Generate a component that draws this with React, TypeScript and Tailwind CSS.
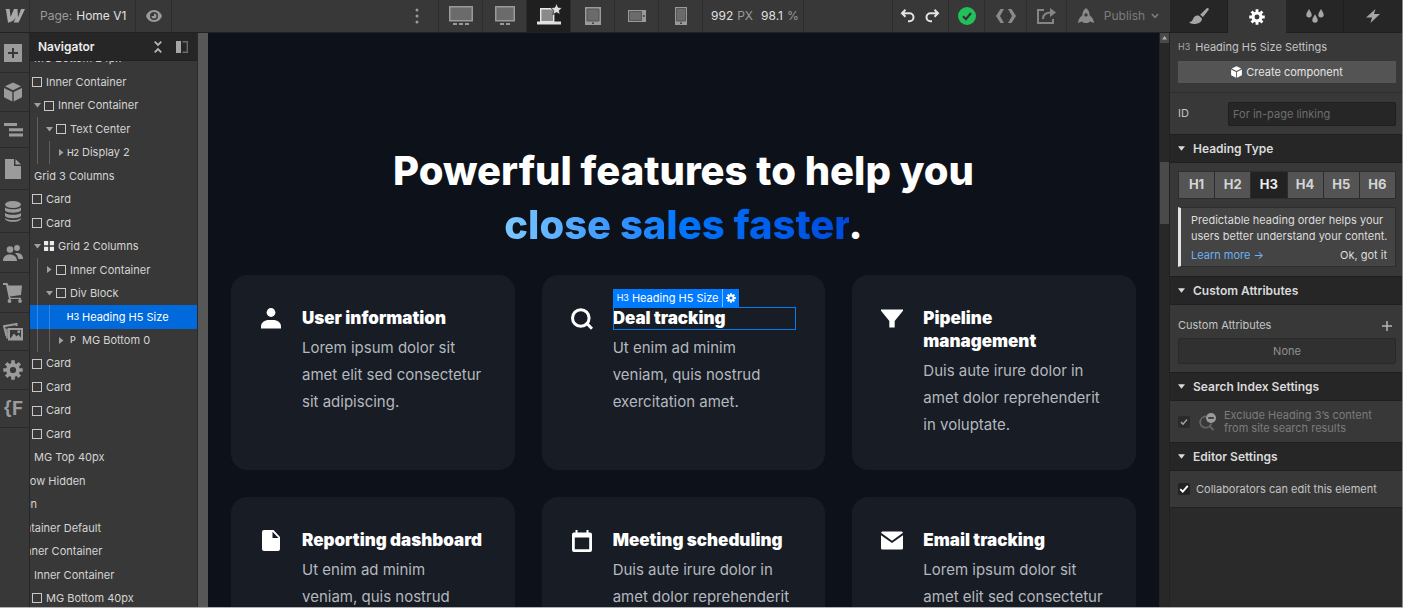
import { useState } from 'react';
import type { ReactNode } from 'react';
import clsx from 'clsx';

type TreeItem = {
  label: string;
  level: number;
  icon?: 'box' | 'grid' | 'H2' | 'H3' | 'P';
  arrow?: 'open' | 'closed';
};

const tree: TreeItem[] = [
  { label: 'MG Bottom 24px', level: 4 },
  { label: 'Inner Container', level: 5, icon: 'box' },
  { label: 'Inner Container', level: 6, icon: 'box', arrow: 'open' },
  { label: 'Text Center', level: 7, icon: 'box', arrow: 'open' },
  { label: 'Display 2', level: 8, icon: 'H2', arrow: 'closed' },
  { label: 'Grid 3 Columns', level: 4 },
  { label: 'Card', level: 5, icon: 'box' },
  { label: 'Card', level: 5, icon: 'box' },
  { label: 'Grid 2 Columns', level: 6, icon: 'grid', arrow: 'open' },
  { label: 'Inner Container', level: 7, icon: 'box', arrow: 'closed' },
  { label: 'Div Block', level: 7, icon: 'box', arrow: 'open' },
  { label: 'Heading H5 Size', level: 8, icon: 'H3' },
  { label: 'MG Bottom 0', level: 8, icon: 'P', arrow: 'closed' },
  { label: 'Card', level: 5, icon: 'box' },
  { label: 'Card', level: 5, icon: 'box' },
  { label: 'Card', level: 5, icon: 'box' },
  { label: 'Card', level: 5, icon: 'box' },
  { label: 'MG Top 40px', level: 4 },
  { label: 'Overflow Hidden', level: 1 },
  { label: 'Section', level: 1 },
  { label: 'Container Default', level: 2 },
  { label: 'Inner Container', level: 3 },
  { label: 'Inner Container', level: 4 },
  { label: 'MG Bottom 40px', level: 5, icon: 'box' },
];

const SELECTED = 11;

/* ---------- icons ---------- */

const GearIcon = ({ className }: { className?: string }) => (
  <svg viewBox="0 0 20 20" className={className} fill="none" stroke="currentColor">
    <circle cx="10" cy="10" r="5" strokeWidth="3.8" />
    <path
      strokeWidth="3.6"
      d="M10 .3v4.200M10 15.500v4.200M.3 10h4.200M15.500 10h4.200M3.200 3.200l2.800 2.800M14 14l2.800 2.800M16.800 3.200l-2.800 2.800M6 14l-2.800 2.800"
    />
  </svg>
);

const CubeIcon = ({ className }: { className?: string }) => (
  <svg viewBox="0 0 18 20" className={className} fill="currentColor">
    <path d="M9 .5l8 3.8-8 4-8-4zM0 6l8.300 4v9.500L0 15.300zM18 6l-8.300 4v9.500l8.300-4.200z" />
  </svg>
);

const CheckMark = ({ className }: { className?: string }) => (
  <svg viewBox="0 0 12 12" className={className} fill="none" stroke="currentColor" strokeWidth="2.200">
    <path d="M1.500 6.200l3 3L10.500 2.200" />
  </svg>
);

const railItems: { name: string; height: string; icon: ReactNode }[] = [
  {
    name: 'Add elements',
    height: 'h-10',
    icon: (
      <svg viewBox="0 0 18 18" className="size-[18px]">
        <path fill="currentColor" d="M0 0h18v18H0z" />
        <path stroke="#383838" strokeWidth="2" d="M9 4v10M4 9h10" />
      </svg>
    ),
  },
  { name: 'Components', height: 'h-[39px]', icon: <CubeIcon className="h-5 w-[18px]" /> },
  {
    name: 'Navigator',
    height: 'h-9',
    icon: (
      <svg viewBox="0 0 19 14" className="h-[14px] w-[19px]" fill="currentColor">
        <path d="M0 0h13v3H0zM5 5.300h14v3H5zM5 10.600h14v3H5z" />
      </svg>
    ),
  },
  {
    name: 'Pages',
    height: 'h-[42px]',
    icon: (
      <svg viewBox="0 0 16 20" className="h-5 w-4" fill="currentColor">
        <path d="M0 0h9v7h7v13H0zM10.500 0L16 5.500h-5.500z" />
      </svg>
    ),
  },
  {
    name: 'CMS collections',
    height: 'h-[43px]',
    icon: (
      <svg viewBox="0 0 16 21" className="h-[21px] w-4" fill="currentColor">
        <ellipse cx="8" cy="3.500" rx="8" ry="3.500" />
        <path d="M0 6.200c2 2.700 14 2.700 16 0v3.300c-2 3-14 3-16 0zM0 11.700c2 2.700 14 2.700 16 0V15c-2 3-14 3-16 0zM0 17c2 2.700 14 2.700 16 0v1.200c-2 3.400-14 3.400-16 0z" />
      </svg>
    ),
  },
  {
    name: 'Users',
    height: 'h-10',
    icon: (
      <svg viewBox="0 0 20 16" className="h-4 w-5" fill="currentColor">
        <circle cx="7" cy="4.500" r="3.300" />
        <circle cx="14" cy="3" r="2.900" />
        <path d="M0 16c0-4 2.500-6.500 6.800-6.500S14 12 14 16zM12 8.200c4-1 8 .6 8 5.800h-4.600c-.3-2.500-1.500-4.500-3.400-5.800z" />
      </svg>
    ),
  },
  {
    name: 'Ecommerce',
    height: 'h-10',
    icon: (
      <svg viewBox="0 0 20 20" className="size-5" fill="currentColor">
        <path d="M0 0h4.500l1 2.500H19l-1 9.500-11 1.500.5 1.300H18V16H6L3 2H0z" />
        <circle cx="6.500" cy="18" r="1.900" />
        <circle cx="17" cy="18" r="1.900" />
      </svg>
    ),
  },
  {
    name: 'Assets',
    height: 'h-[38px]',
    icon: (
      <svg viewBox="0 0 20 18" className="h-[18px] w-5" fill="none" stroke="currentColor" strokeWidth="2">
        <path d="M3.500 13L1 3.200 13.500 1v2" />
        <path d="M6 6h13v10.500H6z" />
        <path fill="currentColor" stroke="none" d="M7 16l4-5.500 2.500 3 2-2L19 16zM14.500 7.500h2.500V10h-2.500z" />
        <path strokeWidth="1.600" d="M4 5.500v10" />
      </svg>
    ),
  },
  { name: 'Settings', height: 'h-[39px]', icon: <GearIcon className="size-5" /> },
  {
    name: 'Finsweet',
    height: 'h-[38px]',
    icon: <span className="text-[19px] leading-5 font-bold">{'{F'}</span>,
  },
];

const cards: { title: string; text: string; icon: ReactNode; selected?: boolean }[] = [
  {
    title: 'User information',
    text: 'Lorem ipsum dolor sit amet elit sed consectetur sit adipiscing.',
    icon: (
      <svg viewBox="0 0 20 21" className="h-[21px] w-5" fill="currentColor">
        <circle cx="10" cy="4.500" r="4.400" />
        <path d="M0 20.500v-2C0 14.500 3.500 12 8 12h4c4.500 0 8 2.500 8 6.500v2z" />
      </svg>
    ),
  },
  {
    title: 'Deal tracking',
    text: 'Ut enim ad minim veniam, quis nostrud exercitation amet.',
    selected: true,
    icon: (
      <svg viewBox="0 0 22 22" className="size-[22px]" fill="none" stroke="currentColor" strokeWidth="3">
        <circle cx="9.800" cy="10" r="8.300" />
        <path d="M15 14.500l6 6.300" />
      </svg>
    ),
  },
  {
    title: 'Pipeline management',
    text: 'Duis aute irure dolor in amet dolor reprehenderit in voluptate.',
    icon: (
      <svg viewBox="0 0 23 19" className="h-[19px] w-[23px]" fill="currentColor">
        <path d="M0 0h23v1.500L14.300 12v7H8.700v-7L0 1.500z" />
      </svg>
    ),
  },
  {
    title: 'Reporting dashboard',
    text: 'Ut enim ad minim veniam, quis nostrud exercitation amet.',
    icon: (
      <svg viewBox="0 0 18 21" className="h-[21px] w-[18px]" fill="currentColor">
        <path fillRule="evenodd" d="M2 0h9.500L18 7v12a2 2 0 0 1-2 2H2a2 2 0 0 1-2-2V2a2 2 0 0 1 2-2zM10.500 1.800V8h6z" />
      </svg>
    ),
  },
  {
    title: 'Meeting scheduling',
    text: 'Duis aute irure dolor in amet dolor reprehenderit in voluptate.',
    icon: (
      <svg viewBox="0 0 20 22" className="h-[22px] w-5" fill="currentColor">
        <path fillRule="evenodd" d="M3.500 0h2v2.500h9V0h2v2.500H18a2 2 0 0 1 2 2V20a2 2 0 0 1-2 2H2a2 2 0 0 1-2-2V4.500a2 2 0 0 1 2-2h1.500zM2.800 7.500v11.700h14.400V7.500z" />
      </svg>
    ),
  },
  {
    title: 'Email tracking',
    text: 'Lorem ipsum dolor sit amet elit sed consectetur sit adipiscing.',
    icon: (
      <svg viewBox="0 0 23 19" className="h-[19px] w-[23px]" fill="currentColor">
        <path d="M1 0h21l1 1.500-11.500 8.300L0 1.500zM0 4l11.500 8L23 4v13.500a1.500 1.500 0 0 1-1.500 1.500h-20A1.500 1.500 0 0 1 0 17.500z" />
      </svg>
    ),
  },
];

/* ---------- top bar ---------- */

const devices: { name: string; icon: ReactNode }[] = [
  {
    name: 'Large desktop',
    icon: (
      <svg viewBox="0 0 24 20" className="h-5 w-6">
        <rect x=".75" y=".75" width="22.500" height="14" fill="#6b6b6b" stroke="#9a9a9a" strokeWidth="1.500" />
        <path fill="#9a9a9a" d="M4 17h4v2H4zM10 17h4v2h-4zM16 17h4v2h-4z" />
      </svg>
    ),
  },
  {
    name: 'Desktop',
    icon: (
      <svg viewBox="0 0 20 20" className="size-5">
        <rect x=".75" y=".75" width="18.500" height="14" fill="#6b6b6b" stroke="#9a9a9a" strokeWidth="1.500" />
        <path fill="#9a9a9a" d="M5 17h4v2H5zM11 17h4v2h-4z" />
      </svg>
    ),
  },
  {
    name: 'Laptop, base breakpoint',
    icon: (
      <svg viewBox="0 0 26 22" className="mb-1 h-[22px] w-[26px]">
        <path fill="#8a8a8a" stroke="#e8e8e8" strokeWidth="1.400" d="M4.700 5.700h13v13h-13z" />
        <path fill="#e0e0e0" d="M1 18.500h24v3H1z" />
        <path
          fill="#e0e0e0"
          stroke="#1f1f1f"
          strokeWidth=".8"
          d="M20.500.5l1.700 3.800 4 .4-3 2.800.9 4.100-3.600-2.100-3.600 2.100.9-4.100-3-2.800 4-.4z"
        />
      </svg>
    ),
  },
  {
    name: 'Tablet',
    icon: (
      <svg viewBox="0 0 16 18" className="h-[18px] w-4">
        <path fill="#9a9a9a" d="M0 0h16v18H0z" />
        <path fill="#6b6b6b" stroke="#555" d="M2 2h12v12H2z" />
        <circle cx="8" cy="16.200" r=".9" fill="#333" />
      </svg>
    ),
  },
  {
    name: 'Mobile landscape',
    icon: (
      <svg viewBox="0 0 18 12" className="h-3 w-[18px]">
        <path fill="#9a9a9a" d="M0 0h18v12H0z" />
        <path fill="#6b6b6b" stroke="#555" d="M1.500 1.500h12v9h-12z" />
        <circle cx="16" cy="6" r=".9" fill="#333" />
      </svg>
    ),
  },
  {
    name: 'Mobile portrait',
    icon: (
      <svg viewBox="0 0 12 18" className="h-[18px] w-3">
        <path fill="#9a9a9a" d="M0 0h12v18H0z" />
        <path fill="#6b6b6b" stroke="#555" d="M1.500 1.500h9v12.500h-9z" />
        <circle cx="6" cy="16.200" r=".9" fill="#333" />
      </svg>
    ),
  },
];

const barButton = 'flex items-center justify-center border-r border-[#2d2d2d]';

const TopBar = () => (
  <header className="flex h-[33px] shrink-0 border-b border-[#222] bg-[#383838] text-xs text-[#9b9b9b]">
    <button aria-label="Menu" className="flex w-[30px] items-center justify-center border-r border-[#2d2d2d]">
      <svg viewBox="0 0 20 14" className="h-[14px] w-5" fill="#a8a8a8">
        <path d="M20 0l-6.400 13.500H8.700l2-5C9 11.300 6.600 13.200 3 13.800L1 .8 0 0h4.600l1 8L9 0h3.500l.5 8.500L16 0z" />
      </svg>
    </button>
    <button className="flex items-center gap-1 border-r border-[#2d2d2d] pr-[9px] pl-[10px]">
      <span>Page:</span>
      <span className="text-[#e0e0e0]">Home V1</span>
    </button>
    <button aria-label="Preview" className={clsx(barButton, 'w-9')}>
      <svg viewBox="0 0 16 12" className="h-3 w-4" fill="currentColor">
        <path fillRule="evenodd" d="M8 0c4 0 7 3 8 6-1 3-4 6-8 6S1 9 0 6c1-3 4-6 8-6zm0 2a4 4 0 1 0 0 8 4 4 0 0 0 0-8z" />
        <path d="M8 3.500a2.500 2.500 0 1 1-2.500 2.500L8 6z" />
      </svg>
    </button>
    <div className="grow" />
    <button aria-label="More breakpoints" className="flex w-11 items-center justify-center border-r border-[#2d2d2d]">
      <svg viewBox="0 0 4 16" className="h-4 w-1" fill="currentColor">
        <circle cx="2" cy="2" r="1.500" />
        <circle cx="2" cy="8" r="1.500" />
        <circle cx="2" cy="14" r="1.500" />
      </svg>
    </button>
    {devices.map((device, i) => (
      <button
        key={device.name}
        aria-label={device.name}
        className={clsx(barButton, 'w-11', i === 2 && 'bg-[#1f1f1f]')}
      >
        {device.icon}
      </button>
    ))}
    <div className="flex w-[101px] items-center gap-1 border-r border-[#2d2d2d] pl-2">
      <span className="text-[#e0e0e0]">992</span>
      <span>PX</span>
      <span className="ml-1 text-[#e0e0e0]">98.1</span>
      <span>%</span>
    </div>
    <div className="w-[89px] border-r border-[#2d2d2d]" />
    <div className="flex w-14 items-center justify-center gap-2 border-r border-[#2d2d2d] pr-[2px] text-[#e4e4e4]">
      <button aria-label="Undo">
        <svg viewBox="0 0 16 14" className="h-[14px] w-4" fill="none" stroke="currentColor" strokeWidth="2">
          <path d="M5.500.8L2 4.300l3.500 3.500M2 4.300h7.500a4 4 0 0 1 0 8H8" />
        </svg>
      </button>
      <button aria-label="Redo">
        <svg viewBox="0 0 16 14" className="h-[14px] w-4" fill="none" stroke="currentColor" strokeWidth="2">
          <path d="M10.500.8L14 4.300l-3.500 3.500M14 4.300H6.500a4 4 0 0 0 0 8H8" />
        </svg>
      </button>
    </div>
    <button aria-label="Saved" className={clsx(barButton, 'w-9')}>
      <svg viewBox="0 0 18 18" className="size-[18px]">
        <circle cx="9" cy="9" r="9" fill="#22c05b" />
        <path fill="none" stroke="#333" strokeWidth="2.200" d="M5 9.200l2.900 2.900L13 6" />
      </svg>
    </button>
    <button aria-label="Export code" className={clsx(barButton, 'w-[42px]')}>
      <svg viewBox="0 0 20 14" className="h-[14px] w-5" fill="#8a8a8a">
        <path d="M4.500 0H8L4 7l4 7H4.500L0 7zM15.500 0H12l4 7-4 7h3.500L20 7z" />
      </svg>
    </button>
    <button aria-label="Share" className={clsx(barButton, 'w-10')}>
      <svg viewBox="0 0 19 16" className="h-4 w-[19px]" fill="none" stroke="#858585" strokeWidth="2">
        <path d="M7 2H1v13h15v-4" />
        <path d="M6 11c0-5 3-6.500 8-6.500" />
        <path fill="#858585" stroke="none" d="M13 0l6 4.500L13 9z" />
      </svg>
    </button>
    <button className="flex w-[103px] items-center justify-center text-[#7c7c7c]">
      <svg viewBox="0 0 16 16" className="size-4" fill="#8a8a8a">
        <path fillRule="evenodd" d="M8 0c2.500 1.800 3.700 4.300 3.700 7.500 2.500 1.500 4 4 4.300 7.500l-4-1.500-2 1.500H6l-2-1.500L0 15c.3-3.500 1.800-6 4.300-7.500C4.300 4.300 5.500 1.800 8 0zm0 5.200a1.700 1.700 0 1 0 0 3.400 1.700 1.700 0 0 0 0-3.400z" />
      </svg>
      <span className="ml-[10px]">Publish</span>
      <svg viewBox="0 0 8 6" className="ml-[6px] h-[6px] w-2" fill="none" stroke="currentColor" strokeWidth="1.600">
        <path d="M.8 1L4 4.400 7.200 1" />
      </svg>
    </button>
  </header>
);

/* ---------- navigator ---------- */

const TreeIcon = ({ icon }: { icon: TreeItem['icon'] }) => {
  if (icon === 'box') {
    return <span className="size-[10px] border border-[#c8c8c8]" />;
  }
  if (icon === 'grid') {
    return (
      <svg viewBox="0 0 10 10" className="size-[10px]" fill="#ececec">
        <path d="M0 0h4.200v4.200H0zM5.800 0H10v4.200H5.800zM0 5.800h4.200V10H0zM5.800 5.800H10V10H5.800z" />
      </svg>
    );
  }
  if (icon) return <span className="text-[9px] font-medium">{icon}</span>;
  return null;
};

const Navigator = () => {
  const [selected, setSelected] = useState(SELECTED);

  return (
    <section className="flex w-[168px] shrink-0 flex-col overflow-hidden border-r border-[#2a2a2a] bg-[#383838]">
      <div className="z-10 flex h-7 shrink-0 items-center border-b border-[#222] bg-[#262626] pr-[9px] pl-2">
        <h2 className="grow text-xs font-semibold text-[#ececec]">Navigator</h2>
        <button aria-label="Collapse all" className="mr-[14px] text-[#b4b4b4]">
          <svg viewBox="0 0 8 12" className="h-3 w-2" fill="none" stroke="currentColor" strokeWidth="1.800">
            <path d="M.7.7L4 4 7.300.7M.7 11.300L4 8l3.300 3.300" />
          </svg>
        </button>
        <button aria-label="Pin panel">
          <svg viewBox="0 0 12 12" className="size-3">
            <path fill="#a6a6a6" d="M0 0h5v12H0z" />
            <path fill="none" stroke="#6a6a6a" strokeWidth="1.400" d="M6.500.7h4.800v10.600H6.500" />
          </svg>
        </button>
      </div>
      {/* tree is scrolled both down and to the right, so outer levels slide under the left edge */}
      <ul className="-mt-[14px] -ml-[71px] grid h-[563px] shrink-0 auto-rows-fr text-[11px] text-[#d4d4d4]">
        {tree.map((item, i) => (
          <li
            key={i}
            className={clsx('relative', i === selected && 'bg-[#006adc] text-white')}
          >
            {item.level > 6 && <span className="absolute inset-y-0 left-[78px] w-px bg-white/20" />}
            {item.level > 7 && <span className="absolute inset-y-0 left-[90px] w-px bg-white/20" />}
            <button
              className="flex h-full w-full items-center whitespace-nowrap"
              style={{ paddingLeft: item.level * 12 }}
              onClick={() => setSelected(i)}
            >
              <span className="flex w-3 shrink-0 items-center justify-center text-[#a0a0a0]">
                {item.arrow === 'open' && (
                  <svg viewBox="0 0 7 5" className="h-[5px] w-[7px]" fill="currentColor">
                    <path d="M0 0h7L3.500 4.500z" />
                  </svg>
                )}
                {item.arrow === 'closed' && (
                  <svg viewBox="0 0 5 7" className="h-[7px] w-[5px]" fill="currentColor">
                    <path d="M0 0v7l4.500-3.500z" />
                  </svg>
                )}
              </span>
              <span className="mr-[3px] flex w-3 shrink-0 items-center justify-center">
                <TreeIcon icon={item.icon} />
              </span>
              {item.label}
            </button>
          </li>
        ))}
      </ul>
    </section>
  );
};

/* ---------- canvas ---------- */

const FeatureCard = ({ title, text, icon, selected }: (typeof cards)[number]) => (
  <article className="flex min-h-[195px] gap-5 rounded-2xl bg-[#181c24] px-[29px] pt-8 pb-7">
    <div className="flex h-[23px] w-[22px] shrink-0 items-center justify-center text-white">{icon}</div>
    <div className="grow">
      <div className="relative">
        <h3 className="text-[17px] leading-[23px] font-black text-white">{title}</h3>
        {selected && (
          <>
            <div className="absolute inset-0 border border-[#007df0]" />
            <div className="absolute bottom-full left-0 flex h-[18px] items-center bg-[#007aff] text-[11px] whitespace-nowrap text-white">
              <span className="pl-1 text-[9px]">H3</span>
              <span className="px-[3px]">Heading H5 Size</span>
              <button aria-label="Element settings" className="flex h-full w-[17px] items-center justify-center border-l border-white/50">
                <GearIcon className="size-[10px]" />
              </button>
            </div>
          </>
        )}
      </div>
      <p className="mt-1 pr-1 text-[15px] leading-[27px] text-[#b4b8bf]">{text}</p>
    </div>
  </article>
);

const Canvas = () => (
  <main className="flex min-w-0 grow overflow-hidden bg-[#575757] pl-[10px] [font-optical-sizing:none]">
    <div className="grow overflow-hidden bg-[#0d1119] px-[23px] pt-[111px]">
      <h1 className="text-center text-[40px] leading-[54px] font-extrabold text-white">
        Powerful features to help you
        <br />
        <span className="bg-linear-to-r from-[#7cc8ff] via-[#0077ff] to-[#0049db] bg-clip-text text-transparent">
          close sales faster
        </span>
        .
      </h1>
      <div className="mt-[23px] grid grid-cols-3 gap-[27px]">
        {cards.map((card) => (
          <FeatureCard key={card.title} {...card} />
        ))}
      </div>
    </div>
    <div className="flex w-[11px] shrink-0 flex-col border-x border-[#222] bg-[#282828]">
      <div className="flex h-[10px] items-center justify-center bg-[#4a4a4a]">
        <svg viewBox="0 0 5 4" className="h-1 w-[5px]" fill="#b0b0b0">
          <path d="M0 3.500h5L2.500 0z" />
        </svg>
      </div>
      <div className="mt-[119px] h-[62px] bg-[#4a4a4a]" />
    </div>
  </main>
);

/* ---------- settings panel ---------- */

const panelTabs: { name: string; icon: ReactNode }[] = [
  {
    name: 'Style',
    icon: (
      <svg viewBox="0 0 20 16" className="h-4 w-5" fill="currentColor">
        <path d="M18.500 0c1 0 1.700 1 1 1.900L14 9l-2.800-2.300L17.500.5c.3-.3.6-.5 1-.5zM10 7.800l2.800 2.400c.8 3.800-3.500 6-7.800 5.800-2.500-.1-4-.8-5-2 2 0 3-.8 3.800-2.500C5 8.500 7 7 10 7.800z" />
      </svg>
    ),
  },
  { name: 'Settings', icon: <GearIcon className="size-4" /> },
  {
    name: 'Style manager',
    icon: (
      <svg viewBox="0 0 18 14" className="h-[14px] w-[18px]" fill="currentColor">
        <path d="M3 0c1.400 2.500 2.700 4 2.700 5.700a2.700 2.700 0 0 1-5.400 0C.3 4 1.600 2.500 3 0zM15 0c1.400 2.500 2.700 4 2.700 5.700a2.700 2.700 0 0 1-5.400 0C12.300 4 13.600 2.500 15 0zM9 5.300c1.400 2.500 2.700 4 2.700 5.700a2.700 2.700 0 0 1-5.400 0c0-1.700 1.300-3.200 2.700-5.700z" />
      </svg>
    ),
  },
  {
    name: 'Interactions',
    icon: (
      <svg viewBox="0 0 14 14" className="size-[14px]" fill="currentColor">
        <path d="M9.500 0L8 5h6L4.500 14 6 8.500H0z" />
      </svg>
    ),
  },
];

const SectionTitle = ({ children }: { children: ReactNode }) => (
  <h2 className="h-[29px] border-y border-[#1f1f1f] bg-[#262626] text-xs font-semibold text-[#dadada]">
    <button className="flex h-full w-full items-center gap-2 pl-2">
      <svg viewBox="0 0 8 5" className="h-[5px] w-[7px]" fill="currentColor">
        <path d="M0 0h8L4 5z" />
      </svg>
      {children}
    </button>
  </h2>
);

const SettingsPanel = () => {
  const [heading, setHeading] = useState('H3');
  const [canEdit, setCanEdit] = useState(true);

  return (
    <aside className="w-[233px] shrink-0 overflow-hidden border-r border-[#8a8a8a] bg-[#2a2a2a] text-[11px] text-[#c4c4c4]">
      <div className="grid h-[33px] grid-cols-4 bg-[#262626]" role="tablist">
        {panelTabs.map((tab, i) => (
          <button
            key={tab.name}
            role="tab"
            aria-label={tab.name}
            aria-selected={i === 1}
            className={clsx(
              'flex items-center justify-center',
              i === 1 ? 'bg-[#383838] text-white' : 'border-r border-b border-[#1f1f1f] text-[#a6a6a6]',
            )}
          >
            {tab.icon}
          </button>
        ))}
      </div>

      <div className="bg-[#383838] pr-[6px] pl-2">
        <div className="flex h-7 items-center gap-[5px]">
          <span className="text-[9px] text-[#a6a6a6]">H3</span>
          Heading H5 Size Settings
        </div>
        <button className="flex h-[22px] w-full items-center justify-center gap-1 bg-[#545454] text-[#e4e4e4]">
          <CubeIcon className="h-3 w-[11px] text-white" />
          Create component
        </button>
      </div>
      <div className="bg-[#383838] pt-[9px]">
        <div className="flex h-[42px] items-center border-t border-[#2d2d2d] pr-[6px] pl-2">
          <label htmlFor="element-id" className="w-[50px] shrink-0">
            ID
          </label>
          <input
            id="element-id"
            placeholder="For in-page linking"
            className="h-6 min-w-0 grow rounded-xs border border-[#1f1f1f] bg-[#262626] px-1 placeholder:text-[#6e6e6e]"
          />
        </div>
      </div>

      <SectionTitle>Heading Type</SectionTitle>
      <div className="bg-[#383838] pt-2 pr-[6px] pb-[9px] pl-2">
        <div className="grid h-7 grid-cols-6 gap-px border border-[#2d2d2d] bg-[#2d2d2d]">
          {['H1', 'H2', 'H3', 'H4', 'H5', 'H6'].map((tag) => (
            <button
              key={tag}
              onClick={() => setHeading(tag)}
              className={clsx(
                'text-[13px] font-bold',
                tag === heading ? 'bg-[#222] text-[#ececec]' : 'bg-[#545454] text-[#d4d4d4]',
              )}
            >
              {tag}
            </button>
          ))}
        </div>
        <div className="mt-2 flex h-[60px] flex-col justify-center border border-l-3 border-[#2d2d2d] border-l-[#e4e4e4] bg-[#444] pr-2 pl-[10px] leading-4 text-[#dcdcdc]">
          <p className="whitespace-nowrap">
            Predictable heading order helps your
            <br />
            users better understand your content.
          </p>
          <div className="mt-[3px] flex justify-between">
            <a href="#learn" className="text-[#6bb1f5]">
              Learn more →
            </a>
            <button>Ok, got it</button>
          </div>
        </div>
      </div>

      <SectionTitle>Custom Attributes</SectionTitle>
      <div className="bg-[#383838] pt-2 pr-[6px] pb-2 pl-2">
        <div className="flex h-[25px] items-center justify-between pr-1">
          Custom Attributes
          <button aria-label="Add attribute">
            <svg viewBox="0 0 10 10" className="size-[10px]" stroke="#b4b4b4" strokeWidth="1.500">
              <path d="M5 0v10M0 5h10" />
            </svg>
          </button>
        </div>
        <div className="flex h-[26px] items-center justify-center rounded-xs border border-[#292929] bg-[#303030] text-[#909090]">
          None
        </div>
      </div>

      <SectionTitle>Search Index Settings</SectionTitle>
      <label className="flex h-[41px] items-center bg-[#383838] pl-2 leading-[13px] text-[#7c7c7c]">
        <span className="relative flex size-3">
          <input type="checkbox" checked disabled className="size-3 appearance-none rounded-xs bg-[#2a2a2a]" />
          <CheckMark className="absolute inset-[2px] size-2 text-[#a0a0a0]" />
        </span>
        <svg viewBox="0 0 17 18" className="mr-2 ml-[9px] h-[18px] w-[17px]" fill="none" stroke="#666" strokeWidth="1.800">
          <path d="M7 3.500a5.600 5.600 0 1 0 5.200 7M10.500 13l4 4" />
          <circle cx="12" cy="5" r="5" fill="#9b9b9b" stroke="none" />
          <path stroke="#383838" d="M9.200 5h5.600" />
        </svg>
        <span>
          Exclude Heading 3’s content
          <br />
          from site search results
        </span>
      </label>

      <SectionTitle>Editor Settings</SectionTitle>
      <label className="flex h-[37px] items-center border-b border-[#222] bg-[#383838] pl-2">
        <span className="relative mr-[6px] flex size-3">
          <input
            type="checkbox"
            checked={canEdit}
            onChange={(e) => setCanEdit(e.target.checked)}
            className="size-3 appearance-none rounded-xs bg-[#222]"
          />
          {canEdit && <CheckMark className="pointer-events-none absolute inset-px size-[10px] text-white" />}
        </span>
        Collaborators can edit this element
      </label>
    </aside>
  );
};

const App = () => (
  <div className="flex h-screen overflow-hidden border-b border-[#b0b0b0] bg-[#383838] font-[Inter,sans-serif]">
    <div className="flex min-w-0 grow flex-col">
      <TopBar />
      <div className="flex min-h-0 grow">
        <nav className="z-10 w-[30px] shrink-0 border-r border-[#262626] bg-[#383838] text-[#9b9b9b]">
          {railItems.map((item) => (
            <button
              key={item.name}
              aria-label={item.name}
              className={clsx('flex w-full items-center justify-center border-b border-[#2a2a2a] pr-[3px]', item.height)}
            >
              {item.icon}
            </button>
          ))}
        </nav>
        <Navigator />
        <Canvas />
      </div>
    </div>
    <SettingsPanel />
  </div>
);

export default App;
